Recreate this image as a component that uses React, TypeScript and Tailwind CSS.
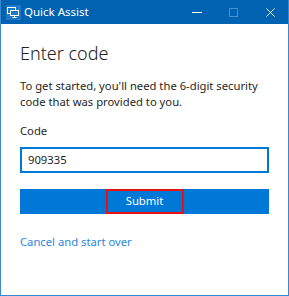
export default function App() {
  return (
    <div className="w-[289px] h-[296px] bg-white flex flex-col border border-t-0 border-[#3a88cf] overflow-hidden font-['Noto_Sans',sans-serif]">
      {/* Title bar */}
      <div className="h-[24px] bg-[#0063b1] flex items-center text-white -mx-px">
        <div className="ml-[6px] w-[15px] h-[15px] bg-[#1d78c6] flex items-center justify-center">
          <svg width="13" height="11" viewBox="0 0 13 11" fill="none" stroke="white" strokeWidth="1">
            <rect x="0.5" y="0.5" width="8" height="6" />
            <rect x="3.5" y="3.5" width="8" height="5" fill="#1d78c6" />
            <path d="M7.5 8.5v2M5.5 10.5h4" />
          </svg>
        </div>
        <span className="ml-[3px] text-[11.5px] leading-none">Quick Assist</span>
        <div className="ml-auto flex items-center h-full">
          <div className="w-[36px] h-full flex items-center justify-center">
            <div className="w-[10px] h-px bg-white" />
          </div>
          <div className="w-[36px] h-full flex items-center justify-center">
            <div className="w-[9px] h-[9px] border border-[#4a8fd0]" />
          </div>
          <div className="w-[38px] h-full flex items-center justify-center">
            <svg width="9" height="9" viewBox="0 0 9 9" stroke="white" strokeWidth="1">
              <path d="M0.5 0.5l8 8M8.5 0.5l-8 8" />
            </svg>
          </div>
        </div>
      </div>

      {/* Content */}
      <div className="flex flex-col px-[19px] text-[#1f1f1f]">
        <h1 className="mt-[17px] text-[18px] leading-[24px] font-light text-[#222]">Enter code</h1>
        <p className="mt-[13px] text-[11.25px] leading-[16px]">
          To get started, you'll need the 6-digit security code that was provided to you.
        </p>
        <label className="mt-[13px] text-[11.25px] leading-[16px]">Code</label>
        <div className="mt-[8px] h-[26px] border-2 border-[#0078d7] flex items-center px-[6px] text-[11.25px]">
          909335
        </div>
        <div className="mt-[16px] h-[25px] bg-[#0078d7] flex items-center justify-center">
          <div className="w-[78px] h-[25px] border-2 border-[#e81010] flex items-center justify-center text-white text-[11.25px]">
            Submit
          </div>
        </div>
        <a className="mt-[20px] text-[11.25px] leading-[16px] text-[#2b86dc]">Cancel and start over</a>
      </div>
    </div>
  );
}
